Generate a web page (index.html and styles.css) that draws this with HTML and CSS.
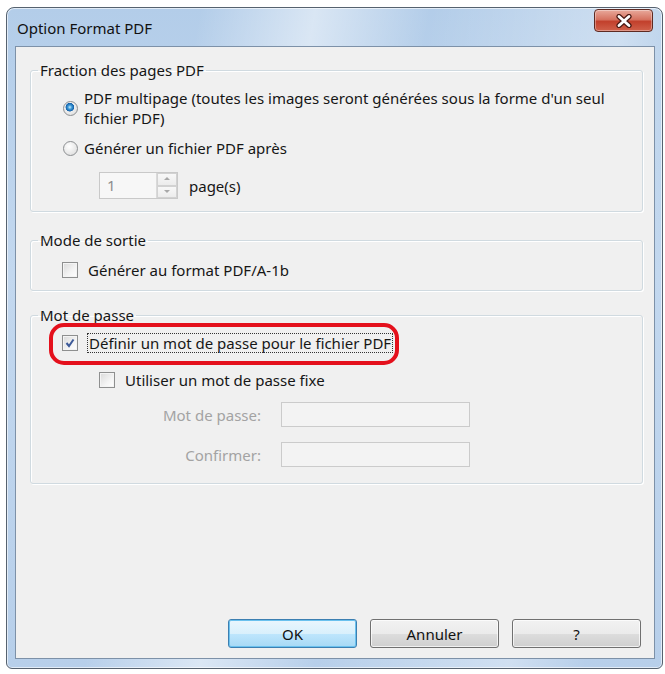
FILE: index.html
```html
<!DOCTYPE html>
<html lang="fr">
<head>
  <meta charset="UTF-8">
  <title>Option Format PDF</title>
  <meta name="viewport" content="width=device-width, initial-scale=1.0">
  <link rel="stylesheet" href="styles.css">
</head>
<body>
  <div class="window">
    <div class="titlebar">
      <span class="title">Option Format PDF</span>
      <button class="close" title="Fermer">
        <svg width="18" height="14" viewBox="0 0 18 14">
          <path d="M4 2.5 L14 11.5 M14 2.5 L4 11.5" stroke="#4a1a14" stroke-width="5.2" stroke-linecap="round"/>
          <path d="M4 2.5 L14 11.5 M14 2.5 L4 11.5" stroke="#fff" stroke-width="2.8" stroke-linecap="round"/>
        </svg>
      </button>
    </div>

    <div class="client">
      <fieldset class="group group-split">
        <legend>Fraction des pages PDF</legend>
        <label class="opt">
          <span class="radio checked"></span>
          <span>PDF multipage (toutes les images seront générées sous la forme d'un seul<br>fichier PDF)</span>
        </label>
        <label class="opt opt-after">
          <span class="radio"></span>
          <span>Générer un fichier PDF après</span>
        </label>
        <div class="pages-row">
          <div class="spin">
            <span class="spin-val">1</span>
            <span class="spin-btns">
              <span class="spin-up"></span>
              <span class="spin-down"></span>
            </span>
          </div>
          <span>page(s)</span>
        </div>
      </fieldset>

      <!-- Mode de sortie -->
      <fieldset class="group group-mode">
        <legend>Mode de sortie</legend>
        <label class="opt">
          <span class="check"></span>
          <span>Générer au format PDF/A-1b</span>
        </label>
      </fieldset>

      <!-- Mot de passe -->
      <fieldset class="group group-pass">
        <legend>Mot de passe</legend>
        <label class="opt opt-focus">
          <span class="check">
            <svg width="16" height="16" viewBox="0 0 16 16">
              <path d="M4.5 8 L7 11 L11.5 4.5" fill="none" stroke="#3d5a99" stroke-width="2"/>
            </svg>
          </span>
          <span class="focus-text">Définir un mot de passe pour le fichier PDF</span>
          <span class="highlight"></span>
        </label>
        <label class="opt opt-fixed">
          <span class="check"></span>
          <span>Utiliser un mot de passe fixe</span>
        </label>
        <div class="field field-first">
          <span class="field-label">Mot de passe:</span>
          <span class="field-input"></span>
        </div>
        <div class="field">
          <span class="field-label">Confirmer:</span>
          <span class="field-input"></span>
        </div>
      </fieldset>

      <div class="actions">
        <button class="btn btn-default">OK</button>
        <button class="btn">Annuler</button>
        <button class="btn">?</button>
      </div>
    </div>
  </div>
</body>
</html>
```

FILE: styles.css
```css
body { margin: 0; background: #fff; font-family: "Noto Sans", "Open Sans", sans-serif; font-size: 15px; color: #161616; }

.window {
  box-sizing: border-box;
  width: 657px; height: 662px;
  margin: 7px 0 0 6px;
  padding: 0 7px 9px 8px;
  border: 1px solid #56626f;
  border-radius: 8px 8px 6px 6px;
  background:
    linear-gradient(100deg, rgba(255,255,255,0) 25%, rgba(255,255,255,0.5) 40%, rgba(255,255,255,0) 55%, rgba(255,255,255,0.35) 80%, rgba(255,255,255,0) 90%),
    linear-gradient(to bottom, #b3cde9, #c3d8ef 40%, #b7cfea);
  box-shadow: inset 0 0 0 1px rgba(255,255,255,0.6);
  display: flex; flex-direction: column;
}

.titlebar { height: 38px; display: flex; justify-content: space-between; align-items: flex-start; }
.title { margin: 10px 0 0 2px; line-height: 20px; color: #111; }
.close {
  width: 59px; height: 23px; margin: 1px 2px 0 0; padding: 0;
  border: 1px solid #5e2a22; border-radius: 4px;
  background: linear-gradient(to bottom, #e8a99b, #d67361 45%, #c2402c 55%, #d0614b);
  box-shadow: inset 0 0 0 1px rgba(255,255,255,0.35);
  display: flex; align-items: center; justify-content: center;
}

.client {
  flex: 1;
  background: #f0f0f0;
  border: 1px solid #7d91a8;
  padding: 13px 11px 10px 14px;
  display: flex; flex-direction: column;
}

.group {
  margin: 0;
  padding: 8px 12px 12px 31px;
  border: 1px solid #d0dae0;
  border-radius: 3px;
  box-shadow: inset 1px 1px 0 #fff, 1px 1px 0 #fff;
}
.group legend { margin-left: -24px; padding: 0 2px; line-height: 20px; }
.group-mode { margin-top: 18px; padding: 10px 12px 10px 31px; }
.group-pass { margin-top: 14px; padding: 8px 12px 16px 31px; }

.opt { display: flex; align-items: center; gap: 6px; line-height: 20px; position: relative; }
.opt-after { margin-top: 10px; }

.radio {
  width: 13px; height: 13px; margin-left: 1px; border-radius: 50%;
  border: 1px solid #8c8f92;
  background: radial-gradient(circle at 40% 35%, #fff, #e4e4e4 70%, #d0d0d0);
  flex: none;
}
.radio.checked {
  background:
    radial-gradient(circle at 45% 40%, #cdeefc 0, #3e9ad8 2px, #1360a8 4px, rgba(0,0,0,0) 4.6px),
    radial-gradient(circle at 40% 35%, #fff, #e4e4e4 70%, #d0d0d0);
}

.check {
  box-sizing: border-box;
  width: 16px; height: 16px;
  border: 1px solid #8e8f8f;
  background: linear-gradient(135deg, #d9d9d9, #f4f4f4 60%, #fff);
  box-shadow: inset 0 0 0 1px #f4f4f4;
  flex: none; margin-right: 4px;
}
.check svg { display: block; margin: -1px; }

.pages-row { display: flex; align-items: center; gap: 11px; margin: 14px 0 0 37px; line-height: 20px; }
.spin {
  box-sizing: border-box; width: 79px; height: 27px;
  border: 1px solid #c9c9c9; background: #f7f7f7;
  display: flex; justify-content: space-between;
}
.spin-val { color: #8d8d8d; padding: 2px 0 0 7px; }
.spin-btns { width: 20px; display: flex; flex-direction: column; border-left: 1px solid #dadada; }
.spin-btns span { flex: 1; position: relative; background: linear-gradient(#f8f8f8, #ececec); border: 1px solid #d2d2d2; }
.spin-btns span::after {
  content: ""; position: absolute; left: 50%; top: 50%; margin: -2px 0 0 -3px;
  border-left: 3px solid transparent; border-right: 3px solid transparent;
}
.spin-up::after { border-bottom: 3px solid #a8a8a8; }
.spin-down::after { border-top: 3px solid #a8a8a8; }

.opt-focus .check { margin-right: 3px; }
.focus-text { border: 1px dotted #333; padding: 0 1px; line-height: 18px; }
.highlight {
  position: absolute; left: -13px; top: -10px;
  width: 350px; height: 42px; box-sizing: border-box;
  border: 4px solid #e4101c; border-radius: 15px;
  pointer-events: none;
}
.opt-fixed { margin: 17px 0 0 37px; }

.field { display: flex; align-items: center; gap: 20px; margin-top: 15px; }
.field-first { margin-top: 12px; }
.field-label { width: 199px; text-align: right; color: #a3a3a3; }
.field-input { box-sizing: border-box; width: 189px; height: 25px; border: 1px solid #cbcbcb; background: #f3f3f3; }

.actions { margin: auto 2px 0 0; display: flex; justify-content: flex-end; gap: 13px; }
.btn {
  width: 129px; height: 29px; padding: 0;
  font: inherit; color: #111;
  border: 1px solid #707070; border-radius: 3px;
  background: linear-gradient(to bottom, #f2f2f2, #ebebeb 50%, #dddddd 51%, #cfcfcf);
  box-shadow: inset 0 0 0 1px rgba(255,255,255,0.7);
}
.btn-default {
  border-color: #3c7fb1;
  background: linear-gradient(to bottom, #eaf6fd, #d9f0fc 50%, #bee6fd 51%, #a7d9f5);
  box-shadow: inset 0 0 0 1px #6ac1ee;
}
```
